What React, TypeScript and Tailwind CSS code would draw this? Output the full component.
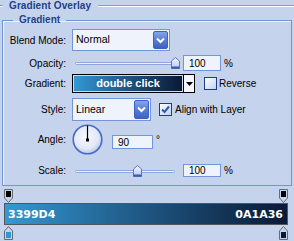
import React from 'react'

function DropButton() {
    return (
        <div className="flex h-full w-[15px] items-center justify-center rounded-[2px] border border-[#3d61c0] bg-linear-to-b from-[#86a4e8] via-[#5a7dd4] to-[#3e62c2]">
            <svg width="9" height="7" viewBox="0 0 9 7">
                <path d="M1 1.5 L4.5 5 L8 1.5" stroke="#fff" strokeWidth="2" fill="none" />
            </svg>
        </div>
    )
}

function Select({ value, className }: { value: string; className: string }) {
    return (
        <div className={`flex items-center border border-[#7294da] bg-[#eff3fc] py-[1px] pl-[3px] pr-[1px] ${className}`}>
            <span className="flex-1 text-[10.5px] text-black">{value}</span>
            <DropButton />
        </div>
    )
}

function Checkbox({ checked }: { checked?: boolean }) {
    return (
        <div className="flex h-[13px] w-[13px] shrink-0 items-center justify-center border border-[#1d3d8e] bg-linear-to-br from-white to-[#c4d0ee]">
            {checked && (
                <svg width="9" height="9" viewBox="0 0 9 9">
                    <path d="M1 4.5 L3.5 7 L8 1.5" stroke="#2a5bb8" strokeWidth="2" fill="none" />
                </svg>
            )}
        </div>
    )
}

function Slider({ pos }: { pos: number }) {
    return (
        <div className="relative h-[12px] w-[108px] shrink-0">
            <div className="absolute left-[3px] top-[5px] h-[3px] w-[100px] rounded-full border border-[#8ea6dd] bg-[#eef2fb]" />
            <svg className="absolute top-0" style={{ left: pos }} width="9" height="12" viewBox="0 0 9 12">
                <defs>
                    <linearGradient id="thumb" x1="0" y1="0" x2="0" y2="1">
                        <stop offset="0" stopColor="#f3f6fd" />
                        <stop offset="1" stopColor="#b9c9ec" />
                    </linearGradient>
                </defs>
                <path d="M4.5 0.5 L8.5 4 L8.5 11.5 L0.5 11.5 L0.5 4 Z" fill="url(#thumb)" stroke="#5a78c6" />
                <rect x="0.5" y="9.5" width="8" height="2" fill="#3a5bb4" />
            </svg>
        </div>
    )
}

function Field({ value, className }: { value: string; className: string }) {
    return (
        <div className={`flex items-center border border-[#7294da] bg-[#eff3fc] pl-[5px] text-[10px] text-black ${className}`}>
            {value}
        </div>
    )
}

function Label({ children }: { children: React.ReactNode }) {
    return <div className="w-[63px] shrink-0 text-right text-[10px] text-black">{children}</div>
}

function TopStop() {
    return (
        <svg width="9" height="14" viewBox="0 0 9 14">
            <path d="M0.5 0.5 L8.5 0.5 L8.5 9 L4.5 13.5 L0.5 9 Z" fill="#c6d3ec" stroke="#6b6b6b" />
            <rect x="2" y="2" width="5" height="6" fill="#000" />
        </svg>
    )
}

function BottomStop({ color }: { color: string }) {
    return (
        <svg width="9" height="14" viewBox="0 0 9 14">
            <path d="M4.5 0.5 L8.5 5 L8.5 13.5 L0.5 13.5 L0.5 5 Z" fill="#c6d3ec" stroke="#6b6b6b" />
            <rect x="2" y="6" width="5" height="6" fill={color} />
        </svg>
    )
}

export default function App() {
    return (
        <div className="h-[241px] w-[294px] overflow-hidden bg-[#c6d3ec] font-['Liberation_Sans',Arial,sans-serif]">
            {/* Header */}
            <div className="flex h-[12px] items-center">
                <div className="h-[2px] w-[3px] border-t border-b border-t-[#7f9bdc] border-b-white" />
                <div className="ml-[6px] mr-[7px] text-[10px] font-bold leading-[12px] tracking-[0.1px] text-[#223f8c]">
                    Gradient Overlay
                </div>
                <div className="h-[2px] flex-1 border-t border-b border-t-[#7f9bdc] border-b-white" />
            </div>

            {/* Gradient group */}
            <fieldset className="mx-[2px] mt-[2px] border border-[#7393d8] pb-[8px] pt-[3px] shadow-[inset_1px_1px_0_#eef2fb]">
                <legend className="ml-[10px] px-[6px] text-[10px] font-bold leading-[12px] text-[#223f8c]">Gradient</legend>

                <div className="flex h-[22px] items-center">
                    <Label>Blend Mode:</Label>
                    <Select value="Normal" className="ml-[6px] h-[22px] w-[98px]" />
                </div>

                <div className="mt-[4px] flex h-[16px] items-center">
                    <Label>Opacity:</Label>
                    <div className="ml-[6px] flex items-center">
                        <Slider pos={99} />
                        <Field value="100" className="ml-[3px] h-[16px] w-[38px]" />
                        <span className="ml-[3px] text-[10px] text-black">%</span>
                    </div>
                </div>

                <div className="mt-[3px] flex h-[19px] items-center">
                    <Label>Gradient:</Label>
                    <div className="ml-[6px] flex h-[19px] w-[123px] border border-black">
                        <div className="flex flex-1 items-center justify-center border border-[#cfdcf0] bg-linear-to-r from-[#3399d4] to-[#0a1a36] text-[11px] font-bold text-white">
                            double click
                        </div>
                        <div className="flex w-[11px] items-center justify-center border-l border-black bg-[#f4f6fb]">
                            <svg width="7" height="4" viewBox="0 0 7 4">
                                <path d="M0 0 L7 0 L3.5 4 Z" fill="#000" />
                            </svg>
                        </div>
                    </div>
                    <div className="ml-[9px] flex items-center">
                        <Checkbox />
                        <span className="ml-[2px] text-[10px] text-black">Reverse</span>
                    </div>
                </div>

                <div className="mt-[5px] flex h-[23px] items-center">
                    <Label>Style:</Label>
                    <Select value="Linear" className="ml-[6px] h-[23px] w-[79px]" />
                    <div className="ml-[8px] flex items-center">
                        <Checkbox checked />
                        <span className="ml-[3px] text-[10px] text-black">Align with Layer</span>
                    </div>
                </div>

                <div className="mt-[3px] flex h-[31px] items-center">
                    <Label>Angle:</Label>
                    <svg className="ml-[6px] shrink-0" width="31" height="31" viewBox="0 0 31 31">
                        <defs>
                            <radialGradient id="dial" cx="0.45" cy="0.4" r="0.6">
                                <stop offset="0" stopColor="#f5f8fd" />
                                <stop offset="0.7" stopColor="#e2e9f7" />
                                <stop offset="1" stopColor="#b8c8ea" />
                            </radialGradient>
                        </defs>
                        <circle cx="15.5" cy="15.5" r="14.3" fill="url(#dial)" stroke="#4a6bc4" strokeWidth="1.6" />
                        <line x1="15.5" y1="16" x2="15.5" y2="1.5" stroke="#000" strokeWidth="1.2" />
                        <rect x="14" y="14.5" width="3" height="3" fill="#000" />
                    </svg>
                    <Field value="90" className="ml-[9px] mt-[11px] h-[14px] w-[41px] self-start" />
                    <span className="ml-[3px] mt-[8px] self-start text-[10px] text-black">°</span>
                </div>

                <div className="mt-[9px] flex h-[13px] items-center">
                    <Label>Scale:</Label>
                    <div className="ml-[6px] flex items-center">
                        <Slider pos={61} />
                        <Field value="100" className="ml-[3px] h-[13px] w-[38px]" />
                        <span className="ml-[3px] text-[10px] text-black">%</span>
                    </div>
                </div>
            </fieldset>

            {/* Gradient editor */}
            <div className="ml-[4px] mt-[3px] w-[284px]">
                <div className="flex h-[14px] justify-between">
                    <TopStop />
                    <TopStop />
                </div>
                <div className="flex h-[22px] items-center justify-between border border-[#565656] bg-linear-to-r from-[#3399d4] to-[#0a1a36] pl-[3px] pr-[4px] pt-[2px] font-['DejaVu_Sans',sans-serif] text-[11px] font-bold text-white">
                    <span>3399D4</span>
                    <span>0A1A36</span>
                </div>
                <div className="mt-[1px] flex h-[14px] justify-between">
                    <BottomStop color="#3399d4" />
                    <BottomStop color="#0a1a36" />
                </div>
            </div>
        </div>
    )
}
